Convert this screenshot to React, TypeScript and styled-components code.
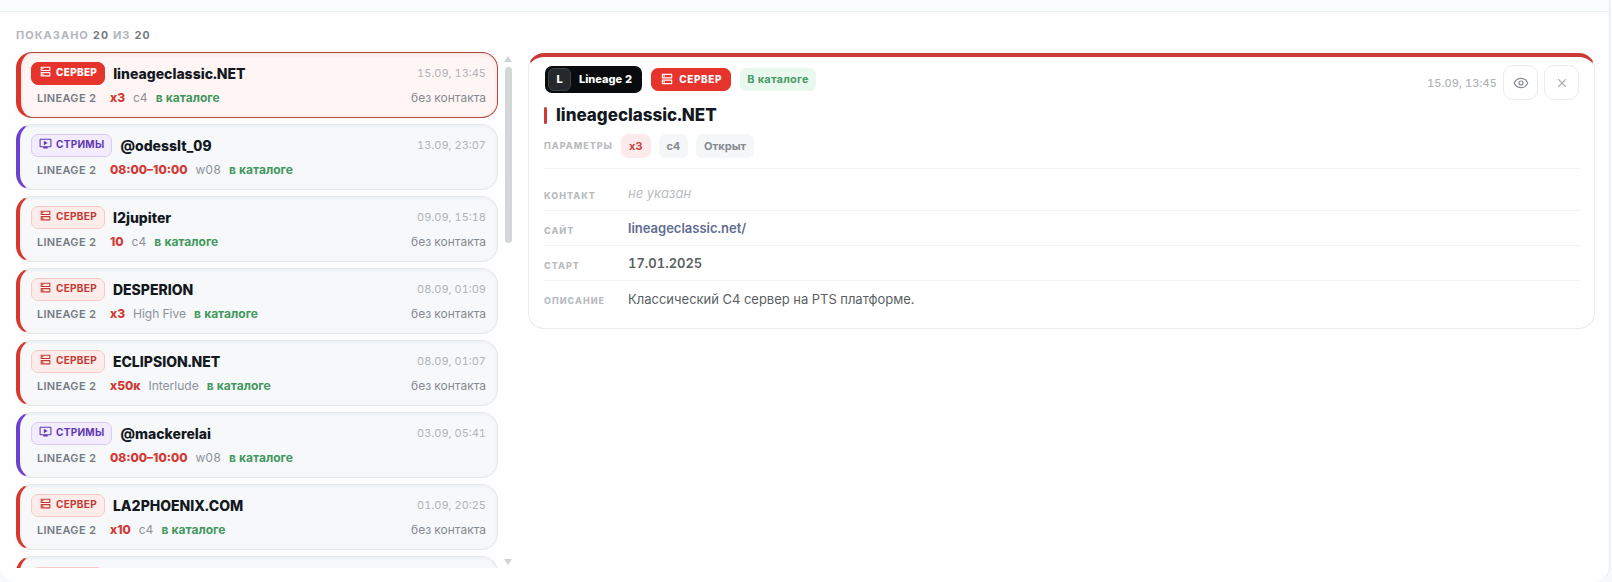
import React, { useState } from "react";
import styled, { createGlobalStyle, css } from "styled-components";
import { MdOutlineDns, MdOutlineOndemandVideo } from "react-icons/md";
import { Eye, X } from "lucide-react";

const GlobalStyle = createGlobalStyle`
  *, *::before, *::after { box-sizing: border-box; }
  body {
    margin: 0;
    background: #f6f8fa;
    color: #14181f;
    font-family: Inter, "Liberation Sans", sans-serif;
    font-size: 12px;
    line-height: 16px;
    font-variant-numeric: tabular-nums;
  }
  h2, h3, p, ul, dl, dd { margin: 0; padding: 0; }
  ul { list-style: none; }
  button { font: inherit; }
`;

type Kind = "server" | "stream";

const palette = {
  server: { main: "#d9362e", text: "#c23a33", soft: "#feeceb", line: "#f7c9c6" },
  stream: { main: "#6f3fd0", text: "#6237b3", soft: "#f2ecfe", line: "#d9cbf6" },
};

const Shell = styled.main`
  display: flex;
  flex-direction: column;
  height: 100vh;
  margin-right: 2px;
  background: #fefefe;
  border-right: 1px solid #e6eaec;
  border-radius: 0 0 16px 16px;
  overflow: hidden;
`;

const TopStrip = styled.div`
  flex: none;
  height: 12px;
  background: #fafcfd;
  border-bottom: 1px solid #e9eef0;
`;

const Columns = styled.div`
  flex: 1;
  min-height: 0;
  display: grid;
  grid-template-columns: minmax(0, 497px) minmax(0, 1fr);
  gap: 15px;
  padding: 14px 14px 14px 16px;
`;

const ListColumn = styled.section`
  display: flex;
  flex-direction: column;
  min-height: 0;
`;

const Counter = styled.p`
  flex: none;
  margin-bottom: 8px;
  padding-top: 2px;
  height: 18px;
  font-size: 11px;
  line-height: 14px;
  font-weight: 700;
  letter-spacing: 1px;
  text-transform: uppercase;
  color: #b3b7bc;

  strong { color: #767b82; font-weight: 700; }
`;

const ListFrame = styled.div`
  flex: 1;
  min-height: 0;
  display: flex;
  gap: 5px;
`;

const List = styled.ul`
  flex: 1;
  min-width: 0;
  display: flex;
  flex-direction: column;
  gap: 6px;
  overflow-y: auto;
  scrollbar-width: none;
`;

const cardFrame = css<{ $kind: Kind }>`
  display: flex;
  flex-direction: column;
  gap: 1px;
  width: 100%;
  height: 66px;
  padding: 9px 11px 8px 11px;
  background: #f6f8fa;
  border: 1px solid #e6e9ed;
  border-left: 4px solid ${(p) => palette[p.$kind].main};
  border-radius: 16px;
  box-shadow: inset 0 1px 3px #e9ecf0;
`;

const Card = styled.button<{ $kind: Kind; $active: boolean }>`
  ${cardFrame}
  text-align: left;
  color: inherit;
  cursor: pointer;
  ${(p) =>
    p.$active &&
    css`
      background: #fef5f4;
      border-color: #b5473f;
      border-left: 5px solid #d9362e;
      padding-left: 10px;
      box-shadow: inset 0 1px 4px #fbdedb;
    `}
`;

const PendingCard = styled.div<{ $kind: Kind }>`
  ${cardFrame}
  padding-top: 10px;
`;

const CardLine = styled.span`
  display: flex;
  align-items: center;
  gap: 8px;
  height: 23px;
`;

const Badge = styled.span<{ $kind: Kind; $solid?: boolean; $large?: boolean }>`
  display: inline-flex;
  align-items: center;
  gap: 4px;
  min-width: 73px;
  height: 23px;
  padding: 0 7px 4px;
  font-size: 10px;
  line-height: 14px;
  font-weight: 700;
  letter-spacing: 0.3px;
  color: ${(p) => palette[p.$kind].text};
  background: ${(p) => palette[p.$kind].soft};
  border: 1px solid ${(p) => palette[p.$kind].line};
  border-radius: 7px;

  svg { width: 13px; height: 13px; }

  ${(p) =>
    p.$solid &&
    css`
      color: #fff;
      background: #e6332c;
      border-color: #e6332c;
      font-weight: 800;
    `}
  ${(p) =>
    p.$large &&
    css`
      gap: 5px;
      padding: 0 8px;
      letter-spacing: 0.6px;
      svg { width: 14px; height: 14px; }
    `}
`;

const CardTitle = styled.span`
  flex: 1;
  font-size: 14px;
  line-height: 20px;
  padding-top: 1px;
  font-weight: 800;
`;

const CardTime = styled.time`
  padding-bottom: 1px;
  font-size: 11px;
  color: #b0b4b9;
`;

const Game = styled.span`
  width: 71px;
  padding: 0 6px;
  font-size: 11px;
  font-weight: 600;
  letter-spacing: 0.3px;
  white-space: nowrap;
  color: #757b83;
`;

const Rate = styled.span`
  font-weight: 800;
  font-variant-numeric: normal;
  color: #d23a34;
`;

const Chronicle = styled.span`
  color: #8d9299;
`;

const Listed = styled.span`
  font-weight: 700;
  color: #43985e;
`;

const CardContact = styled.span`
  margin-left: auto;
  color: #858a91;
`;

const ScrollTrack = styled.div`
  flex: none;
  display: flex;
  flex-direction: column;
  align-items: center;
  justify-content: space-between;
  width: 10px;
  padding: 4px 0 3px;
`;

const ScrollTop = styled.div`
  display: flex;
  flex-direction: column;
  align-items: center;
  gap: 5px;
`;

const Arrow = styled.span<{ $down?: boolean }>`
  width: 8px;
  height: 6px;
  background: #cfd4d6;
  clip-path: ${(p) => (p.$down ? "polygon(0 0, 100% 0, 50% 100%)" : "polygon(50% 0, 100% 100%, 0 100%)")};
`;

const Thumb = styled.span`
  width: 7px;
  height: 176px;
  border-radius: 4px;
  background: #d2d7d9;
`;

const Detail = styled.article`
  align-self: start;
  margin-top: 27px;
  padding: 8px 15px 12px 15px;
  background: #fff;
  border: 1px solid #e9ebed;
  border-top: 4px solid #cb3a34;
  border-radius: 16px;
`;

const DetailHead = styled.header`
  display: flex;
  align-items: center;
  gap: 9px;
  height: 35px;
`;

const HeadTags = styled.div`
  flex: 1;
  display: flex;
  align-items: center;
  gap: 9px;
  padding: 0 0 7px 1px;
`;

const GameBadge = styled.span`
  display: inline-flex;
  align-items: center;
  gap: 8px;
  height: 27px;
  padding: 0 10px 0 3px;
  font-size: 11px;
  font-weight: 800;
  color: #fff;
  background: #090b0d;
  border-radius: 7px;
`;

const GameLetter = styled.span`
  display: grid;
  place-items: center;
  width: 23px;
  height: 23px;
  background: #26292b;
  border: 1px solid #414446;
  border-radius: 6px;
`;

const ListedBadge = styled.span`
  height: 23px;
  padding: 0 7px;
  font-size: 11px;
  line-height: 23px;
  font-weight: 700;
  letter-spacing: 0.2px;
  color: #4a9d68;
  background: #e9f8ef;
  border-radius: 6px;
`;

const HeadActions = styled.div`
  display: flex;
  align-items: center;
  gap: 6px;
`;

const HeadTime = styled.time`
  font-size: 11px;
  font-weight: 500;
  letter-spacing: 0.1px;
  color: #b2b5b9;
`;

const IconButton = styled.button`
  display: grid;
  place-items: center;
  width: 35px;
  height: 35px;
  padding: 0;
  color: #858a8e;
  background: #fff;
  border: 1px solid #e9ebed;
  border-radius: 10px;
  cursor: pointer;
`;

const DetailTitle = styled.h2`
  display: flex;
  align-items: center;
  gap: 9px;
  margin-top: 3px;
  font-size: 17px;
  line-height: 24px;
  font-weight: 800;

  &::before {
    content: "";
    width: 3px;
    height: 17px;
    border-radius: 2px;
    background: #cb3a34;
  }
`;

const Params = styled.div`
  display: flex;
  align-items: center;
  gap: 8px;
  height: 42px;
  padding-bottom: 4px;
  margin-bottom: 7px;
  border-bottom: 1px solid #f2f3f4;
`;

const labelText = css`
  font-size: 9px;
  line-height: 16px;
  font-weight: 800;
  letter-spacing: 1px;
  text-transform: uppercase;
  color: #b9bcbf;
`;

const ParamsLabel = styled.span`
  ${labelText}
`;

const Chip = styled.span<{ $accent?: boolean }>`
  height: 24px;
  padding: 0 8px;
  font-size: 11px;
  line-height: 24px;
  font-weight: 700;
  color: ${(p) => (p.$accent ? "#c9423c" : "#858b91")};
  background: ${(p) => (p.$accent ? "#fdebeb" : "#f4f6f7")};
  border-radius: 7px;
`;

const Fields = styled.dl`
  display: flex;
  flex-direction: column;
`;

const Field = styled.div`
  display: grid;
  grid-template-columns: 84px 1fr;
  align-items: center;
  height: 35px;
  border-bottom: 1px solid #f2f3f4;

  &:last-child { border-bottom: 0; }
`;

const FieldName = styled.dt`
  ${labelText}
  padding-top: 5px;
`;

const FieldValue = styled.dd<{ $tone?: "empty" | "strong" }>`
  font-size: 13px;
  line-height: 20px;
  color: ${(p) => (p.$tone === "empty" ? "#b9bcbf" : "#5b5f63")};
  font-style: ${(p) => (p.$tone === "empty" ? "italic" : "normal")};
  font-weight: ${(p) => (p.$tone === "strong" ? 600 : 400)};
`;

const SiteLink = styled.a`
  font-weight: 600;
  color: #5f6d92;
  text-decoration: none;
`;

interface Entry {
  kind: Kind;
  title: string;
  time: string;
  rate: string;
  chronicle: string;
  contact?: string;
}

const entries: Entry[] = [
  { kind: "server", title: "lineageclassic.NET", time: "15.09, 13:45", rate: "x3", chronicle: "c4", contact: "без контакта" },
  { kind: "stream", title: "@odesslt_09", time: "13.09, 23:07", rate: "08:00–10:00", chronicle: "w08" },
  { kind: "server", title: "l2jupiter", time: "09.09, 15:18", rate: "10", chronicle: "c4", contact: "без контакта" },
  { kind: "server", title: "DESPERION", time: "08.09, 01:09", rate: "x3", chronicle: "High Five", contact: "без контакта" },
  { kind: "server", title: "ECLIPSION.NET", time: "08.09, 01:07", rate: "x50к", chronicle: "Interlude", contact: "без контакта" },
  { kind: "stream", title: "@mackerelai", time: "03.09, 05:41", rate: "08:00–10:00", chronicle: "w08" },
  { kind: "server", title: "LA2PHOENIX.COM", time: "01.09, 20:25", rate: "x10", chronicle: "c4", contact: "без контакта" },
];

function KindBadge({ kind, solid, large }: { kind: Kind; solid?: boolean; large?: boolean }) {
  return (
    <Badge $kind={kind} $solid={solid} $large={large}>
      {kind === "server" ? <MdOutlineDns /> : <MdOutlineOndemandVideo />}
      {kind === "server" ? "СЕРВЕР" : "СТРИМЫ"}
    </Badge>
  );
}

export default function App() {
  const [selected, setSelected] = useState(0);

  return (
    <>
      <GlobalStyle />
      <Shell>
        <TopStrip />
        <Columns>
          <ListColumn>
            <Counter>
              Показано <strong>20</strong> из <strong>20</strong>
            </Counter>
            <ListFrame>
              <List>
                {entries.map((entry, index) => (
                  <li key={entry.title}>
                    <Card
                      type="button"
                      $kind={entry.kind}
                      $active={index === selected}
                      onClick={() => setSelected(index)}
                    >
                      <CardLine>
                        <KindBadge kind={entry.kind} solid={index === selected} />
                        <CardTitle>{entry.title}</CardTitle>
                        <CardTime>{entry.time}</CardTime>
                      </CardLine>
                      <CardLine>
                        <Game>LINEAGE 2</Game>
                        <Rate>{entry.rate}</Rate>
                        <Chronicle>{entry.chronicle}</Chronicle>
                        <Listed>в каталоге</Listed>
                        <CardContact>{entry.contact}</CardContact>
                      </CardLine>
                    </Card>
                  </li>
                ))}
                <li aria-hidden="true">
                  <PendingCard $kind="server">
                    <CardLine>
                      <Badge $kind="server" />
                    </CardLine>
                  </PendingCard>
                </li>
              </List>
              <ScrollTrack aria-hidden="true">
                <ScrollTop>
                  <Arrow />
                  <Thumb />
                </ScrollTop>
                <Arrow $down />
              </ScrollTrack>
            </ListFrame>
          </ListColumn>

          <Detail>
            <DetailHead>
              <HeadTags>
                <GameBadge>
                  <GameLetter>L</GameLetter>
                  Lineage 2
                </GameBadge>
                <KindBadge kind="server" solid large />
                <ListedBadge>В каталоге</ListedBadge>
              </HeadTags>
              <HeadActions>
                <HeadTime>15.09, 13:45</HeadTime>
                <IconButton type="button" aria-label="Просмотр">
                  <Eye size={16} strokeWidth={1.75} />
                </IconButton>
                <IconButton type="button" aria-label="Закрыть">
                  <X size={14} strokeWidth={2} color="#adb1b4" />
                </IconButton>
              </HeadActions>
            </DetailHead>
            <DetailTitle>lineageclassic.NET</DetailTitle>
            <Params>
              <ParamsLabel>Параметры</ParamsLabel>
              <Chip $accent>x3</Chip>
              <Chip>c4</Chip>
              <Chip>Открыт</Chip>
            </Params>
            <Fields>
              <Field>
                <FieldName>Контакт</FieldName>
                <FieldValue $tone="empty">не указан</FieldValue>
              </Field>
              <Field>
                <FieldName>Сайт</FieldName>
                <FieldValue>
                  <SiteLink href="#site">lineageclassic.net/</SiteLink>
                </FieldValue>
              </Field>
              <Field>
                <FieldName>Старт</FieldName>
                <FieldValue $tone="strong">17.01.2025</FieldValue>
              </Field>
              <Field>
                <FieldName>Описание</FieldName>
                <FieldValue>Классический C4 сервер на PTS платформе.</FieldValue>
              </Field>
            </Fields>
          </Detail>
        </Columns>
      </Shell>
    </>
  );
}
